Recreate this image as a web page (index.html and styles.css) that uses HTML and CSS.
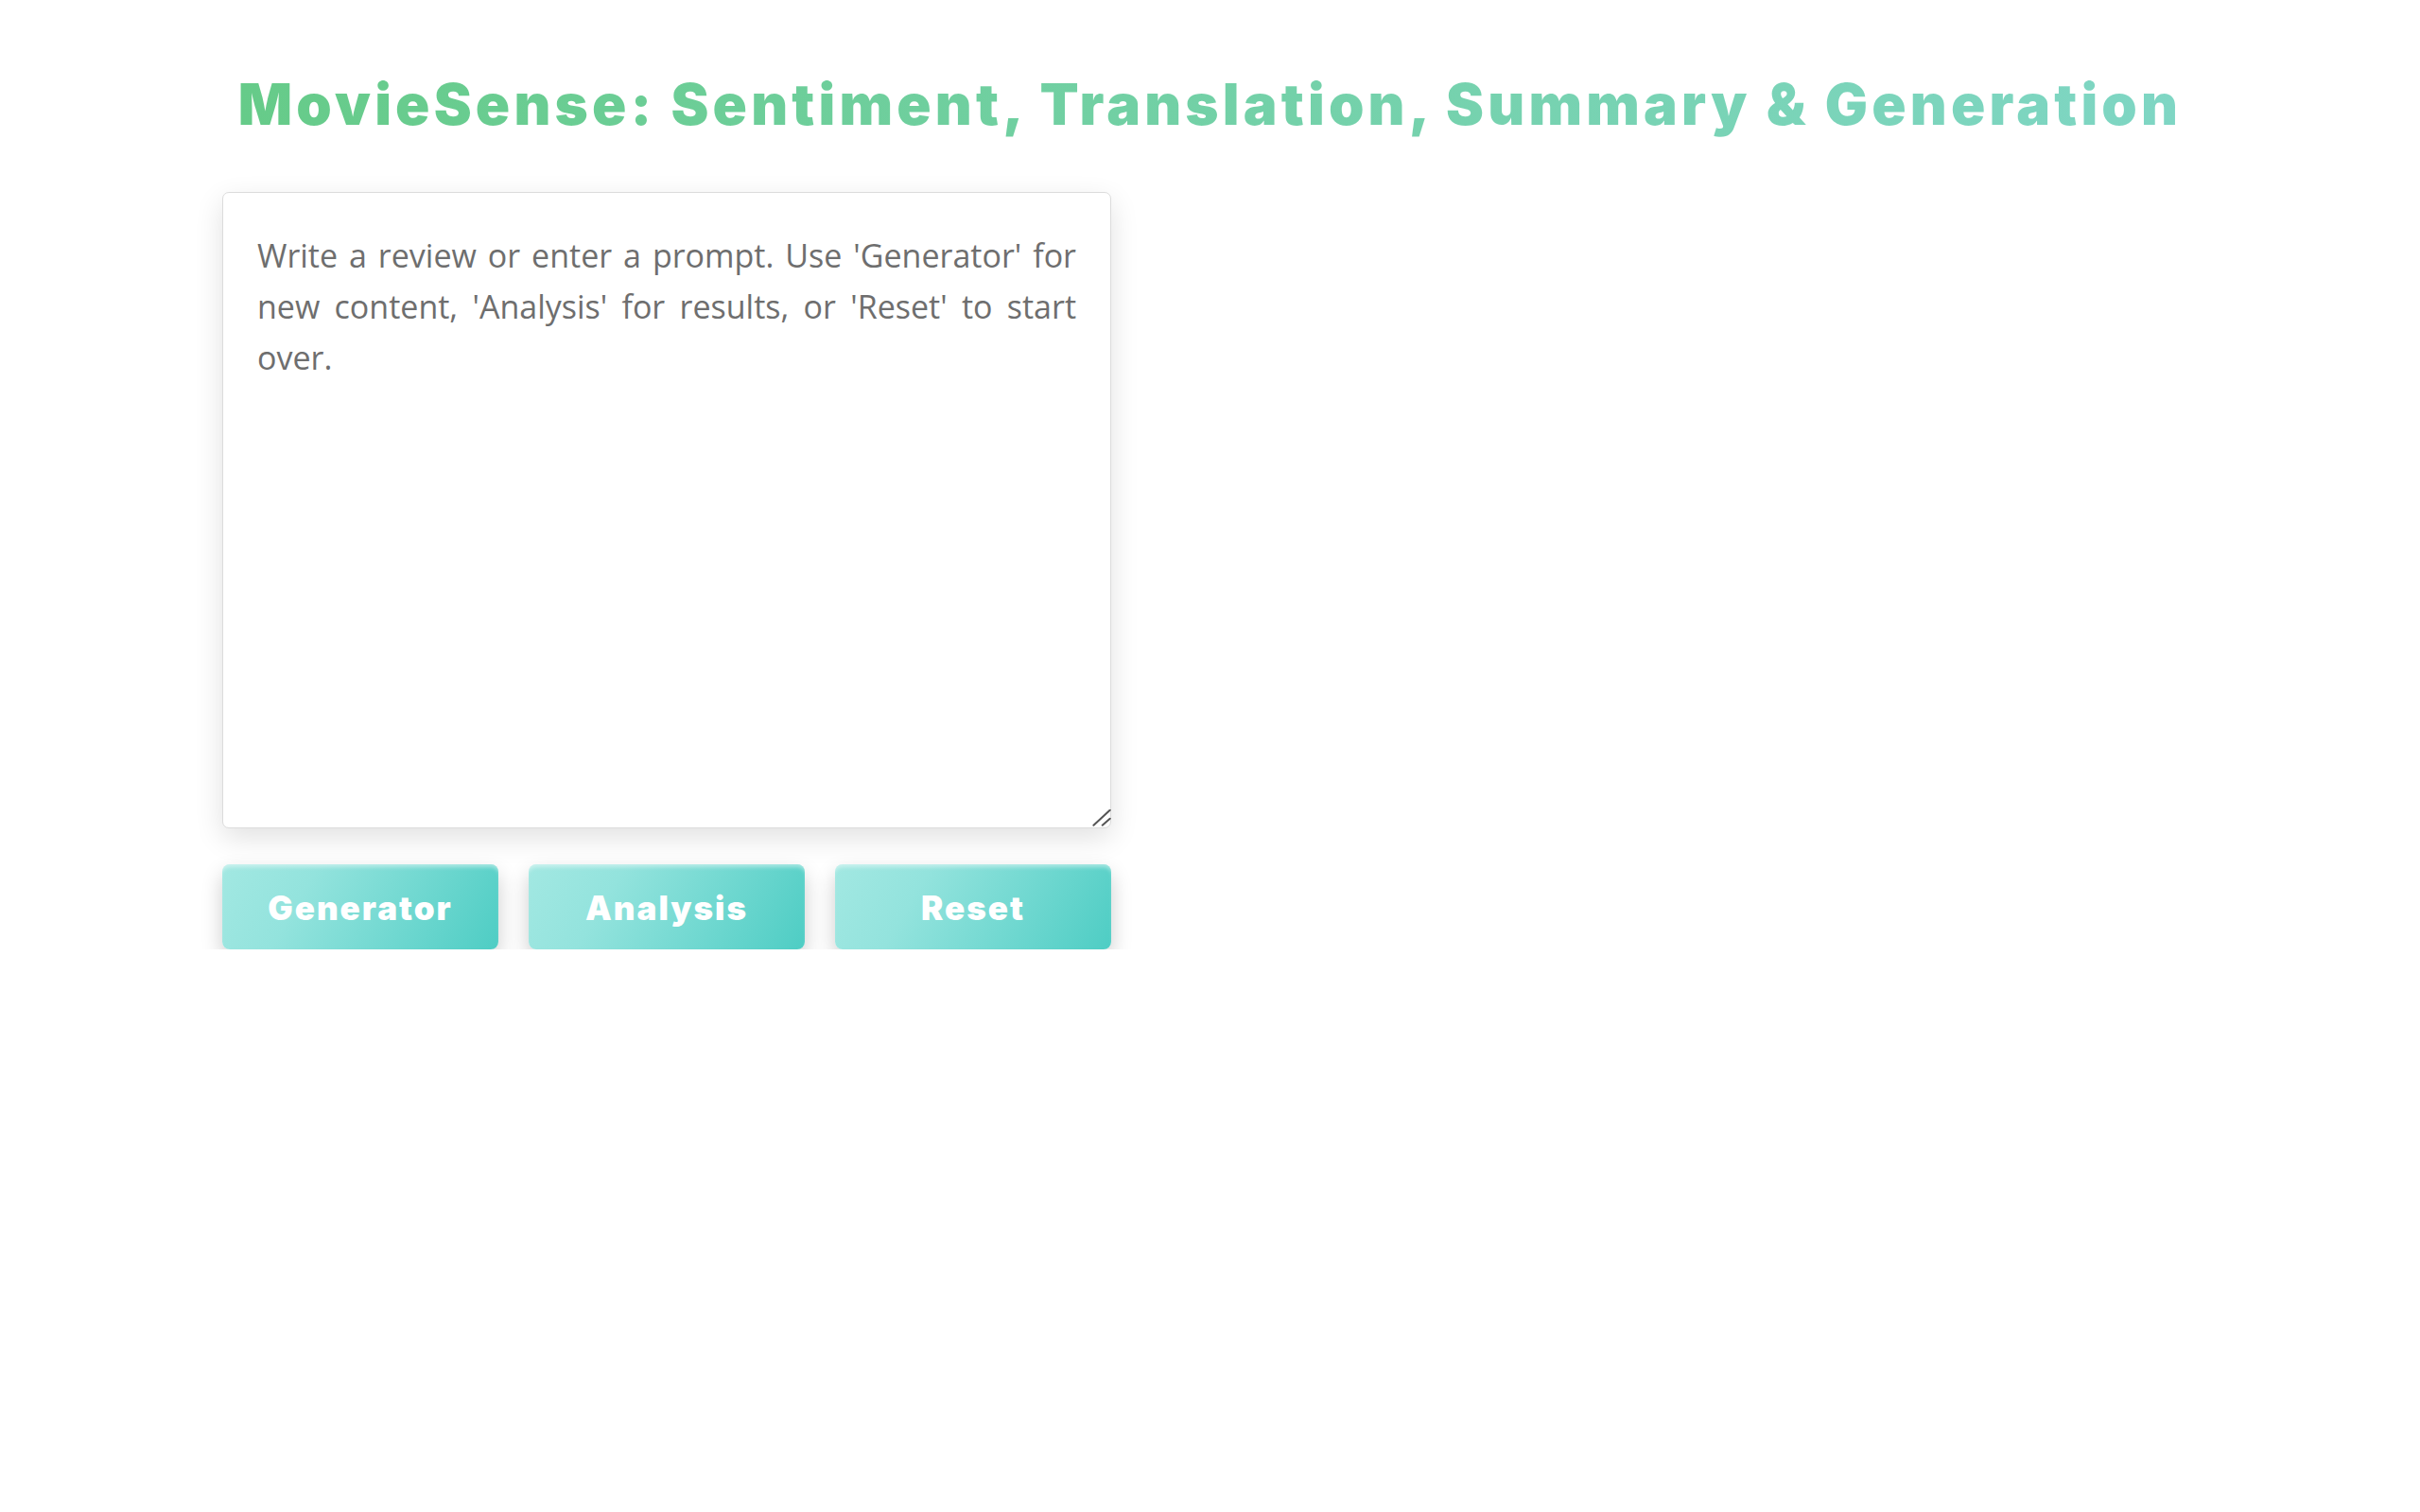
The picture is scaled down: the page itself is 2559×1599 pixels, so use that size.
FILE: index.html
```html
<!DOCTYPE html>
<html lang="en">
<head>
<meta charset="utf-8">
<title>MovieSense</title>
<link rel="stylesheet" href="styles.css">
</head>
<body>
<h1 class="title">MovieSense: Sentiment, Translation, Summary &amp; Generation</h1>
<main class="container">
  <section class="input-col">
    <div class="review-wrap">
      <textarea class="review" placeholder="Write a review or enter a prompt. Use 'Generator' for new content, 'Analysis' for results, or 'Reset' to start over."></textarea>
      <svg class="grip" width="20" height="20" viewBox="0 0 20 20" aria-hidden="true">
        <line x1="1.4" y1="16.7" x2="18.7" y2="0.7" stroke="#555" stroke-width="2" stroke-linecap="round"/>
        <line x1="10.7" y1="16.7" x2="18.7" y2="9.7" stroke="#555" stroke-width="2" stroke-linecap="round"/>
      </svg>
    </div>
    <div class="actions">
      <button class="btn" type="button">Generator</button>
      <button class="btn" type="button">Analysis</button>
      <button class="btn" type="button">Reset</button>
    </div>
  </section>
  <section class="output-col"></section>
</main>
</body>
</html>
```
FILE: styles.css
```css
html, body {
  margin: 0;
  padding: 0;
  background: #ffffff;
}

body {
  font-family: "Inter", "Liberation Sans", sans-serif;
}

.title {
  margin: 74px auto 0;
  width: max-content;
  font-family: "Inter", sans-serif;
  font-weight: 900;
  font-size: 60px;
  line-height: 73px;
  letter-spacing: 4.2px;
  text-align: center;
  background: linear-gradient(90deg, #66cb89 0%, #7fd6c4 100%);
  -webkit-background-clip: text;
  background-clip: text;
  color: transparent;
}

.container {
  max-width: 2089px;
  margin: 56px auto 0;
  display: grid;
  grid-template-columns: 940px 1fr;
  column-gap: 40px;
}

.input-col {
  display: flex;
  flex-direction: column;
}

.review-wrap {
  position: relative;
  display: flex;
}

.review {
  box-sizing: border-box;
  width: 100%;
  height: 673px;
  padding: 39px 36px 36px;
  border: 1px solid #dcdcdc;
  border-radius: 7px;
  box-shadow: 0 10px 30px rgba(0, 0, 0, 0.12);
  font-family: "Open Sans", "Noto Sans", sans-serif;
  font-size: 34px;
  line-height: 54px;
  color: #555;
  text-align: justify;
  resize: none;
  outline: none;
}

.review::placeholder {
  color: #6e6e6e;
  opacity: 1;
}

.grip {
  position: absolute;
  right: 0;
  bottom: 0;
  pointer-events: none;
}

.actions {
  margin-top: 38px;
  display: flex;
  gap: 32px;
}

.btn {
  flex: 1;
  height: 90px;
  border: none;
  border-radius: 8px;
  background: linear-gradient(120deg, #a2e8e2 0%, #93e3dd 30%, #4ecdc4 100%);
  box-shadow: inset 0 5px 4px -2px rgba(255, 255, 255, 0.45), 0 10px 22px rgba(0, 0, 0, 0.2);
  color: #ffffff;
  font-family: "Inter", sans-serif;
  font-weight: 900;
  font-size: 35px;
  letter-spacing: 2px;
  padding-top: 2px;
  cursor: pointer;
}
```
